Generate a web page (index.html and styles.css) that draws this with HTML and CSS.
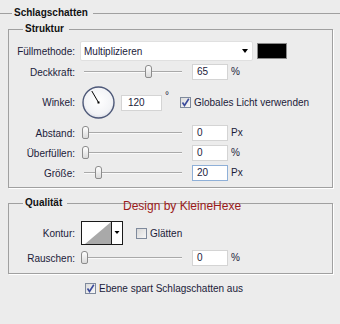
FILE: index.html
```html
<!DOCTYPE html>
<html lang="de">
<head>
    <meta charset="UTF-8">
    <title>Schlagschatten</title>
    <link rel="stylesheet" href="styles.css">
</head>
<body>
    <div class="dialog">
        <fieldset class="group-main">
            <legend>Schlagschatten</legend>

            <fieldset class="box box-struktur">
                <legend>Struktur</legend>
                <div class="row row-mode">
                    <span class="label">Füllmethode:</span>
                    <div class="select"><span>Multiplizieren</span><span class="caret"></span></div>
                    <span class="swatch"></span>
                </div>
                <div class="row">
                    <span class="label">Deckkraft:</span>
                    <div class="slider"><span class="track"></span><span class="thumb" style="left:64px"></span></div>
                    <span class="num">65</span><span class="unit">%</span>
                </div>
                <div class="row row-angle">
                    <span class="label">Winkel:</span>
                    <svg class="dial" width="33" height="33" viewBox="0 0 33 33">
                        <defs>
                            <radialGradient id="dialFill" cx="50%" cy="45%" r="55%">
                                <stop offset="0" stop-color="#ffffff"/>
                                <stop offset="0.8" stop-color="#f2f3f6"/>
                                <stop offset="1" stop-color="#d9dce6"/>
                            </radialGradient>
                        </defs>
                        <circle cx="16.5" cy="16.5" r="15.5" fill="url(#dialFill)" stroke="#4d5878" stroke-width="1.4"/>
                        <line x1="16.5" y1="16.5" x2="9.8" y2="5" stroke="#000" stroke-width="1"/>
                        <rect x="15.5" y="15.5" width="2" height="2" fill="#000"/>
                    </svg>
                    <span class="num num-wide">120</span><span class="deg">°</span>
                    <span class="check check-global"><span class="cb on"><svg width="9" height="9" viewBox="0 0 9 9"><path d="M1.5 4.5 L3.5 7.5 L7.8 0.8" fill="none" stroke="#3a4a9c" stroke-width="1.6"/></svg></span>Globales Licht verwenden</span>
                </div>
                <div class="row">
                    <span class="label">Abstand:</span>
                    <div class="slider"><span class="track"></span><span class="thumb" style="left:1px"></span></div>
                    <span class="num">0</span><span class="unit">Px</span>
                </div>
                <div class="row">
                    <span class="label">Überfüllen:</span>
                    <div class="slider"><span class="track"></span><span class="thumb" style="left:1px"></span></div>
                    <span class="num">0</span><span class="unit">%</span>
                </div>
                <div class="row">
                    <span class="label">Größe:</span>
                    <div class="slider"><span class="track"></span><span class="thumb" style="left:14px"></span></div>
                    <span class="num focused">20</span><span class="unit">Px</span>
                </div>
            </fieldset>

            <fieldset class="box box-qual">
                <legend>Qualität</legend>
                <div class="row row-contour">
                    <span class="label">Kontur:</span>
                    <svg class="contour" width="42" height="24" viewBox="0 0 42 24">
                        <rect x="0.5" y="0.5" width="41" height="23" fill="#fff" stroke="#1a1a1a"/>
                        <polygon points="4,23 30,1 30,23" fill="#a9a9a9"/>
                        <line x1="30.5" y1="1" x2="30.5" y2="23" stroke="#1a1a1a"/>
                        <polygon points="33.5,10 38.5,10 36,13" fill="#000"/>
                    </svg>
                    <span class="check check-smooth"><span class="cb"></span>Glätten</span>
                </div>
                <div class="row row-noise">
                    <span class="label">Rauschen:</span>
                    <div class="slider"><span class="track"></span><span class="thumb" style="left:0px"></span></div>
                    <span class="num">0</span><span class="unit">%</span>
                </div>
            </fieldset>

            <div class="row row-foot">
                <span class="check"><span class="cb on"><svg width="9" height="9" viewBox="0 0 9 9"><path d="M1.5 4.5 L3.5 7.5 L7.8 0.8" fill="none" stroke="#3a4a9c" stroke-width="1.6"/></svg></span>Ebene spart Schlagschatten aus</span>
            </div>
        </fieldset>

        <div class="signature">Design by KleineHexe</div>
    </div>
</body>
</html>
```

FILE: styles.css
```css
body {
    margin: 0;
    background: #ececec;
    font-family: 'Liberation Sans', Arial, sans-serif;
    font-size: 10px;
    color: #1b1b3a;
}

.dialog {
    position: relative;
    width: 340px;
    height: 324px;
    padding-top: 6px;
    box-sizing: border-box;
    overflow: hidden;
}

fieldset {
    margin: 0;
    min-width: 0;
}

legend {
    font-weight: bold;
    line-height: 14px;
    color: #111;
}

.group-main {
    border: none;
    border-top: 1px solid #a0a0a0;
    padding: 0 7px 0 8px;
}

.group-main > legend {
    margin-left: 4px;
    padding: 0 5px 0 2px;
}

.box {
    border: 1px solid #a0a0a0;
    box-shadow: 1px 1px 0 #fff;
}

.box > legend {
    margin-left: 14px;
    padding: 0 5px 0 2px;
}

.box-struktur {
    margin-top: 2px;
    padding: 5px 0 4px;
}

.box-qual {
    margin-top: 8px;
    padding: 10px 0 5px;
}

.row {
    display: flex;
    align-items: center;
    height: 20px;
}

.label {
    flex: none;
    width: 66px;
    text-align: right;
}

.row-mode {
    margin-bottom: 1px;
}

.row-angle {
    height: 41px;
}

.row-contour {
    height: 26px;
}

.row-noise {
    margin-top: 2px;
}

.row-foot {
    height: 14px;
    margin-top: 7px;
    padding-left: 77px;
}

/* Füllmethode */
.select {
    flex: none;
    margin-left: 5px;
    width: 173px;
    height: 20px;
    box-sizing: border-box;
    padding: 0 4px 0 3px;
    background: #fff;
    border: 1px solid #e0e0e0;
    border-radius: 2px;
    display: flex;
    align-items: center;
    justify-content: space-between;
}

.caret {
    border-top: 4px solid #000;
    border-left: 3.5px solid transparent;
    border-right: 3.5px solid transparent;
}

.swatch {
    flex: none;
    margin-left: 4px;
    width: 30px;
    height: 16px;
    box-sizing: border-box;
    background: #000;
    border: 1px solid #8a8a8a;
}

/* Slider */
.slider {
    flex: none;
    position: relative;
    width: 104px;
    height: 14px;
    margin-left: 6px;
}

.track {
    position: absolute;
    left: 3px;
    right: 3px;
    top: 6px;
    border-top: 1px solid #a9a9a9;
    border-bottom: 1px solid #fafafa;
}

.thumb {
    position: absolute;
    top: 0;
    width: 7px;
    height: 13px;
    box-sizing: border-box;
    border: 1px solid #8c8c8c;
    border-radius: 3px 3px 2px 2px;
    background: linear-gradient(#ffffff, #dadada);
}

.num {
    flex: none;
    margin-left: 7px;
    width: 36px;
    height: 16px;
    box-sizing: border-box;
    padding-left: 4px;
    line-height: 14px;
    background: #fff;
    border: 1px solid #d4d4d4;
    color: #1b1b3a;
}

.num.focused {
    border-color: #8fb0d8;
}

.unit {
    margin-left: 3px;
    margin-top: -2px;
}

/* Winkel */
.dial {
    flex: none;
    margin-left: 7px;
}

.num-wide {
    margin-left: 6px;
    width: 41px;
    padding-left: 6px;
}

.deg {
    align-self: flex-start;
    margin: 8px 0 0 3px;
    width: 5px;
}

.check {
    display: flex;
    align-items: center;
}

.check-global {
    margin-left: 10px;
}

.check-smooth {
    margin-left: 13px;
}

.cb {
    flex: none;
    width: 11px;
    height: 11px;
    box-sizing: border-box;
    margin-right: 3px;
    border: 1px solid #7f8a9c;
    background: linear-gradient(135deg, #d8d8d8, #f6f6f6);
    display: flex;
    align-items: center;
    justify-content: center;
}

.cb.on {
    background: linear-gradient(135deg, #dcdcdc, #f8f8f8);
}

/* Kontur */
.contour {
    flex: none;
    margin-left: 6px;
}

.signature {
    position: absolute;
    left: 123px;
    top: 199px;
    font-size: 12px;
    line-height: 14px;
    color: #9b1a1a;
}
```
